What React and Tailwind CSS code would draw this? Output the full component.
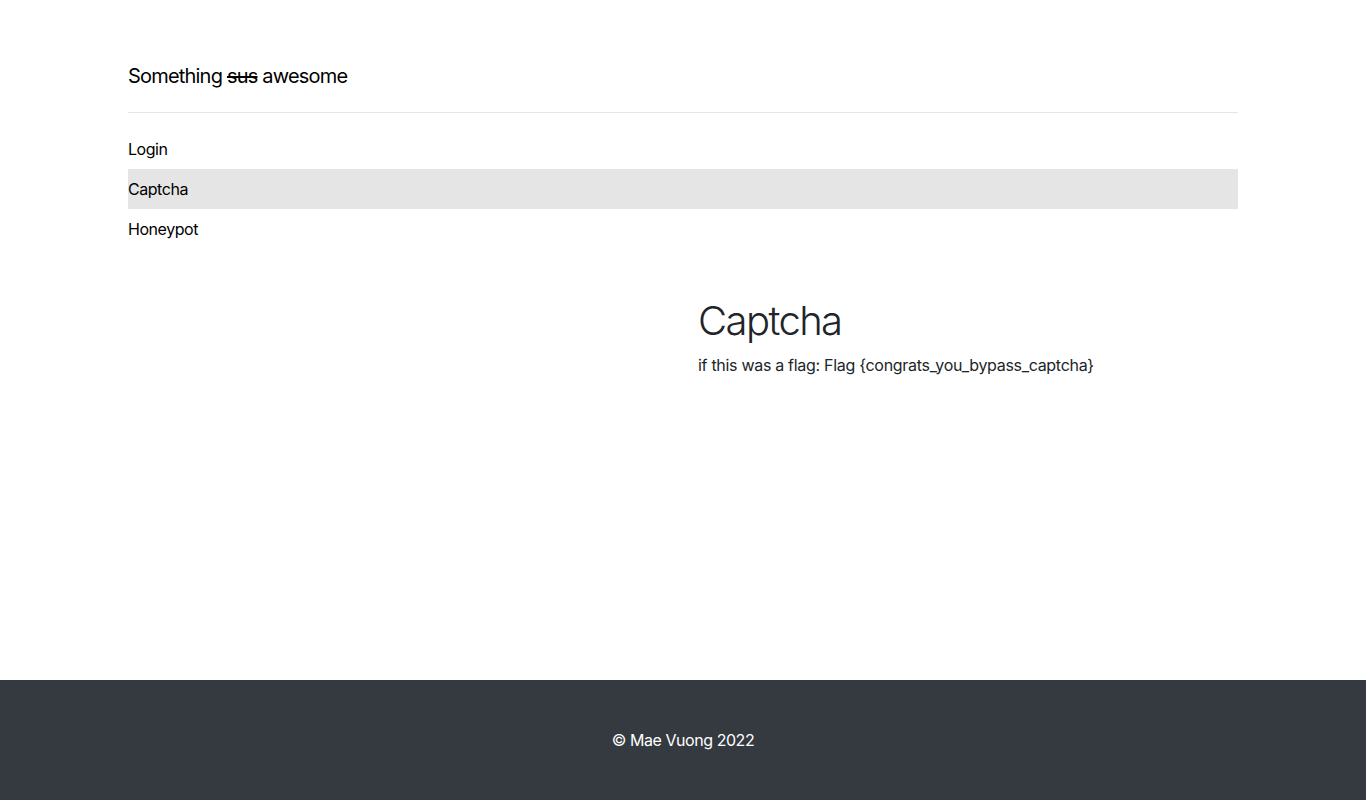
export default function App() {
  const navItem = (label, active) => (
    <div
      className={`py-2 text-base leading-6 tracking-[-0.45px] text-black ${active ? 'bg-[#e5e5e5]' : ''}`}
    >
      {label}
    </div>
  );

  return (
    <div className="flex flex-col min-h-screen bg-white font-['Inter',sans-serif]">
      <div className="flex-1">
        <div className="w-[1110px] mx-auto">
          {/* Header */}
          <header className="pt-[61px] pb-[21px] border-b border-[#e5e5e5]">
            <span className="text-xl leading-[30px] tracking-[-0.8px] text-black">
              Something <s>sus</s> awesome
            </span>
          </header>

          {/* Nav */}
          <nav className="mt-4 flex flex-col">
            {navItem('Login')}
            {navItem('Captcha', true)}
            {navItem('Honeypot')}
          </nav>

          {/* Content */}
          <div className="grid grid-cols-2 gap-[30px] mt-12">
            <div />
            <div>
              <h1 className="text-[40px] leading-[48px] font-light tracking-[-1.6px] text-[#212529] mb-2">Captcha</h1>
              <p className="text-base leading-6 tracking-[-0.3px] text-[#212529]">
                if this was a flag: Flag {'{congrats_you_bypass_captcha}'}
              </p>
            </div>
          </div>
        </div>
      </div>

      {/* Footer */}
      <footer className="h-[120px] bg-[#343a40] flex items-center justify-center">
        <p className="text-base leading-6 tracking-[-0.45px] text-white">© Mae Vuong 2022</p>
      </footer>
    </div>
  );
}
